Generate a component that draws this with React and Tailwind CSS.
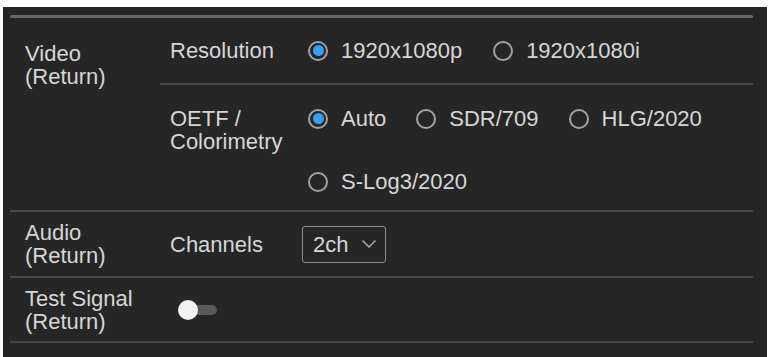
import { useState } from "react";

const RES_OPTIONS = ["1920x1080p", "1920x1080i"];
const OETF_OPTIONS = ["Auto", "SDR/709", "HLG/2020", "S-Log3/2020"];

function Radio({ label, checked, onSelect }) {
  return (
    <div className="flex items-center gap-[13px] cursor-pointer" onClick={onSelect}>
      <div className="w-[20px] h-[20px] rounded-full border-2 border-[#a3a3a3] bg-[#262626] flex items-center justify-center">
        {checked && <div className="w-[11px] h-[11px] rounded-full bg-[#3d9df5]" />}
      </div>
      <span>{label}</span>
    </div>
  );
}

function Divider({ className = "" }) {
  return <div className={"h-[2px] bg-[#474747] " + className} />;
}

export default function App() {
  const [res, setRes] = useState("1920x1080p");
  const [oetf, setOetf] = useState("Auto");
  const [testSignal, setTestSignal] = useState(false);

  return (
    <div
      className="bg-white h-[357px] overflow-hidden pt-[7px] pl-[3px]"
      style={{ fontFamily: '"Liberation Sans", Arial, sans-serif' }}
    >
      <div className="w-[764px] h-[360px] bg-[#262626] pt-[8px] pl-[7px] pr-[14px] text-[22px] leading-[23px] text-[#d6d6d6]">
        <div className="h-[3px] rounded-full bg-[#686868]" />

        {/* Video */}
        <div className="flex">
          <div className="w-[150px] pl-[15px] pt-[24px]">
            <div>Video</div>
            <div>(Return)</div>
          </div>
          <div className="flex-1">
            <div className="flex h-[65px] items-center">
              <div className="w-[142px] pl-[10px]">Resolution</div>
              <div className="flex gap-[31px] pl-[6px]">
                {RES_OPTIONS.map((opt) => (
                  <Radio key={opt} label={opt} checked={res === opt} onSelect={() => setRes(opt)} />
                ))}
              </div>
            </div>
            <Divider />
            <div className="flex pt-[22px] pb-[17px]">
              <div className="w-[142px] pl-[10px]">
                <div>OETF /</div>
                <div>Colorimetry</div>
              </div>
              <div className="flex-1 flex flex-wrap gap-x-[30px] gap-y-[40px] pl-[6px]">
                {OETF_OPTIONS.map((opt) => (
                  <Radio key={opt} label={opt} checked={oetf === opt} onSelect={() => setOetf(opt)} />
                ))}
              </div>
            </div>
          </div>
        </div>
        <Divider />

        {/* Audio */}
        <div className="flex h-[64px] items-center">
          <div className="w-[150px] pl-[15px]">
            <div>Audio</div>
            <div>(Return)</div>
          </div>
          <div className="w-[142px] pl-[10px]">Channels</div>
          <div className="w-[84px] h-[37px] border border-[#8c8c8c] rounded-[3px] flex items-center justify-between pl-[10px] pr-[8px]">
            <span>2ch</span>
            <svg width="16" height="10" viewBox="0 0 16 10" fill="none">
              <path d="M1.5 1.5 L8 8 L14.5 1.5" stroke="#b0b0b0" strokeWidth="1.4" />
            </svg>
          </div>
        </div>
        <Divider />

        {/* Test Signal */}
        <div className="flex h-[63px] items-center">
          <div className="w-[150px] pl-[15px]">
            <div>Test Signal</div>
            <div>(Return)</div>
          </div>
          <div className="pl-[18px]">
            <div
              className="relative w-[39px] h-[20px] flex items-center cursor-pointer"
              onClick={() => setTestSignal(!testSignal)}
            >
              <div className="absolute left-[6px] right-0 h-[10px] rounded-full bg-[#595959]" />
              <div className="relative w-[20px] h-[20px] rounded-full bg-[#f2f2f2]" />
            </div>
          </div>
        </div>
        <Divider />
      </div>
    </div>
  );
}
